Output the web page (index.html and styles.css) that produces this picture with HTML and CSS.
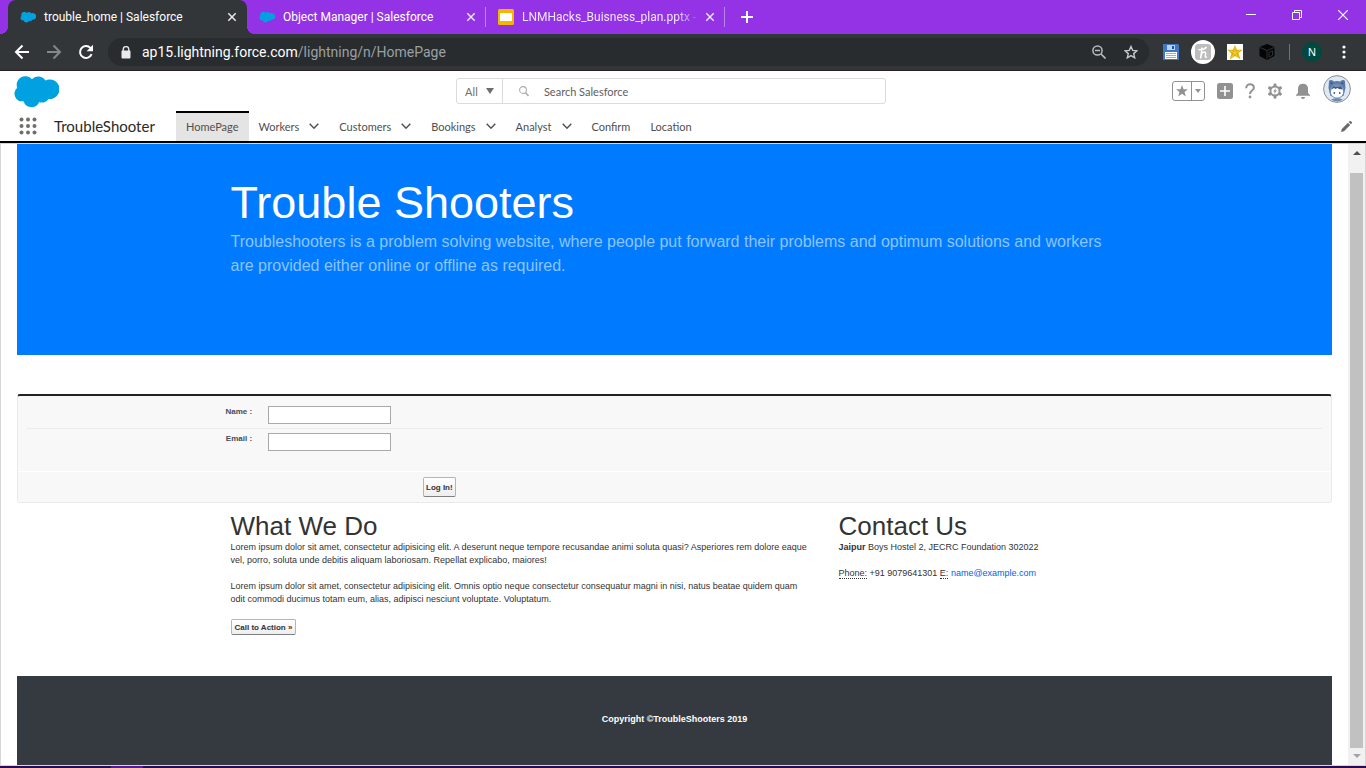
FILE: index.html
```html
<!DOCTYPE html>
<html lang="en">
<head>
<meta charset="utf-8">
<title>trouble_home | Salesforce</title>
<link rel="stylesheet" href="styles.css">
</head>
<body>
<svg class="defs" aria-hidden="true">
  <symbol id="cloud" viewBox="0 0 46 32">
    <path d="M19 4.200a8.500 8.500 0 0 1 13.500 1.200A9.800 9.800 0 1 1 35.500 24a7.500 7.500 0 0 1-9.300 3 8.300 8.300 0 0 1-15.600-.8A7.700 7.700 0 0 1 4.200 12.800 8.700 8.700 0 0 1 19 4.200z" fill="#00a1e0"/>
  </symbol>
  <symbol id="x" viewBox="0 0 10 10"><path d="M1.300 1.300l7.400 7.400M8.700 1.300L1.300 8.700" fill="none" stroke="currentColor" stroke-width="1.500"/></symbol>
  <symbol id="chev" viewBox="0 0 10 6"><path d="M.7.700L5 5.200 9.300.7" fill="none" stroke="currentColor" stroke-width="1.400"/></symbol>
</svg>

<header class="tabstrip">
  <div class="tab tab-active">
    <svg class="fav"><use href="#cloud"/></svg>
    <span class="tab-title">trouble_home | Salesforce</span>
    <button class="tab-close" aria-label="Close tab"><svg width="10" height="10"><use href="#x"/></svg></button>
  </div>
  <div class="tab">
    <svg class="fav"><use href="#cloud"/></svg>
    <span class="tab-title">Object Manager | Salesforce</span>
    <button class="tab-close" aria-label="Close tab"><svg width="10" height="10"><use href="#x"/></svg></button>
  </div>
  <div class="tab tab-last">
    <svg class="fav" viewBox="0 0 16 16"><rect width="16" height="16" rx="1.500" fill="#f7b500"/><path d="M2 4h12v8H2z" fill="#fff"/></svg>
    <span class="tab-title tab-fade">LNMHacks_Buisness_plan.pptx - G</span>
    <button class="tab-close" aria-label="Close tab"><svg width="10" height="10"><use href="#x"/></svg></button>
  </div>
  <button class="newtab" aria-label="New tab"><svg width="12" height="12" viewBox="0 0 12 12"><path d="M6 0v12M0 6h12" stroke="#fff" stroke-width="2"/></svg></button>
  <div class="win">
    <button aria-label="Minimize"><svg width="10" height="10"><path d="M0 4.500h10" stroke="#fff"/></svg></button>
    <button aria-label="Restore"><svg width="10" height="10"><path d="M.5 2.500h7v7h-7zM2.500 2.500v-2h7v7h-2" fill="none" stroke="#fff"/></svg></button>
    <button aria-label="Close window"><svg width="10" height="10"><path d="M0 0l10 10M10 0L0 10" stroke="#fff" stroke-width="1.200"/></svg></button>
  </div>
</header>

<div class="toolbar">
  <button aria-label="Back"><svg width="16" height="16" viewBox="0 0 16 16"><path d="M15 8H2M8.500 1.500L2 8l6.500 6.500" fill="none" stroke="#fff" stroke-width="2"/></svg></button>
  <button aria-label="Forward"><svg width="16" height="16" viewBox="0 0 16 16"><path d="M1 8h13M7.500 1.500L14 8l-6.500 6.500" fill="none" stroke="#85888a" stroke-width="2"/></svg></button>
  <button aria-label="Reload"><svg width="16" height="16" viewBox="0 0 16 16"><path d="M13.600 10.200A6 6 0 1 1 12.400 3.900L13.500 5" fill="none" stroke="#fff" stroke-width="2"/><path d="M15 .8v6.400H8.600z" fill="#fff"/></svg></button>
  <div class="omnibox">
    <svg width="10" height="13" viewBox="0 0 10 13"><path d="M2.200 5V3.400a2.800 2.800 0 0 1 5.600 0V5" fill="none" stroke="#e8eaed" stroke-width="1.400"/><rect y="4.500" x=".5" width="9" height="8" rx="1" fill="#e8eaed"/></svg>
    <span class="url"><b>ap15.lightning.force.com</b>/lightning/n/HomePage</span>
    <button aria-label="Zoom"><svg width="14" height="14" viewBox="0 0 14 14"><circle cx="5.500" cy="5.500" r="4.600" fill="none" stroke="#b9bbbd" stroke-width="1.500"/><path d="M3 5.500h5M9 9l4.500 4.500" stroke="#b9bbbd" stroke-width="1.600"/></svg></button>
    <button aria-label="Bookmark"><svg width="14" height="14" viewBox="0 0 14 14"><path d="M7 1.500l1.700 3.900 4.200.4-3.200 2.800 1 4.200L7 10.600l-3.700 2.200 1-4.200L1.100 5.800l4.200-.4z" fill="none" stroke="#c6c8c9" stroke-width="1.400"/></svg></button>
  </div>
  <div class="exts">
    <button class="ext" aria-label="Save"><svg width="16" height="16" viewBox="0 0 16 16"><path d="M0 0h15l1 1v15H0z" fill="#3f77c9"/><path d="M4 1h8v5H4z" fill="#b9d3f4"/><path d="M9 2h2v3H9z" fill="#22539e"/><path d="M2 8h12v7H2z" fill="#fff"/><path d="M3 9.500h10M3 11.500h10M3 13.500h10" stroke="#9bb0ca"/></svg></button>
    <button class="ext" aria-label="Honey"><svg width="24" height="24" viewBox="0 0 24 24"><circle cx="12" cy="12" r="12" fill="#fff"/><rect x="4" y="4" width="16" height="16" rx="3" fill="#bdbdbd"/><path d="M9.500 18.500C10.500 14.500 11 11 10.700 7.500M7.500 9.500c3 .5 6.500-.5 8-2.500M10.300 14.500c.8-3 5-3.500 4.300-.5-.4 1.700-1 4 1.400 2.800" fill="none" stroke="#fff" stroke-width="1.500"/></svg></button>
    <button class="ext" aria-label="Star"><svg width="16" height="16" viewBox="0 0 16 16"><path d="M0 0h16v16H0z" fill="#fff"/><path d="M8 .7l1.900 5 5.800.1-4.300 3.500 2.200 6L8 12l-5.300 3.400 1.800-6L.3 5.800l5.600-.1z" fill="#dfb000"/><path d="M8 2v7l5-2.500M8 9l3.500 4.500M8 9l-3.500 4.500M8 9L3 6.500" fill="none" stroke="#f6df66" stroke-width=".7"/></svg></button>
    <button class="ext" aria-label="Cube"><svg width="16" height="16" viewBox="0 0 16 16"><path d="M8 0l7.500 3v9L8 16 .5 12V3z" fill="#050505"/><path d="M1 3.500l7 3 7-3M8 6.500V15M10 8.500l3.500-1.700v4.500L10 13z" fill="none" stroke="#34373a" stroke-width=".9"/></svg></button>
    <span class="tool-sep"></span>
    <button class="profile" aria-label="Profile">N</button>
    <button aria-label="Menu"><svg width="4" height="14" viewBox="0 0 4 14"><g fill="#fff"><circle cx="2" cy="2" r="1.600"/><circle cx="2" cy="7" r="1.600"/><circle cx="2" cy="12" r="1.600"/></g></svg></button>
  </div>
</div>

<div class="sf-header">
  <a class="logo" href="#" aria-label="Salesforce"><svg width="46" height="32"><use href="#cloud"/></svg></a>
  <form class="search">
    <button type="button" class="scope">All <svg width="8" height="6"><path d="M0 0h8L4 6z" fill="#706e6b"/></svg></button>
    <svg class="glass" width="10" height="11" viewBox="0 0 10 11"><circle cx="4" cy="4" r="3.400" fill="none" stroke="#b0adab" stroke-width="1.100"/><path d="M6.500 6.800L9.500 10" stroke="#b0adab" stroke-width="1.600"/></svg>
    <input type="search" placeholder="Search Salesforce" aria-label="Search Salesforce">
  </form>
  <div class="sf-actions">
    <span class="favs"><button aria-label="Favorite"><svg width="12" height="12" viewBox="0 0 12 12"><path d="M6 0l1.500 4.200H12L8.500 7l1.300 4.500L6 8.800l-3.800 2.700L3.500 7 0 4.200h4.500z" fill="#919191"/></svg></button><button aria-label="Favorites list"><svg width="6" height="4"><path d="M0 0h6L3 4z" fill="#919191"/></svg></button></span>
    <button aria-label="Add"><svg width="16" height="16" viewBox="0 0 16 16"><rect width="16" height="16" rx="2.500" fill="#919191"/><path d="M8 3v10M3 8h10" stroke="#fff" stroke-width="1.600"/></svg></button>
    <button aria-label="Help"><svg width="10" height="16" viewBox="0 0 10 16"><path d="M1.200 5.200C1.200-.4 8.900.2 8.900 4.700 8.900 7.600 5 7.600 5 11" fill="none" stroke="#919191" stroke-width="2"/><circle cx="5" cy="14" r="1.400" fill="#919191"/></svg></button>
    <button aria-label="Setup"><svg width="16" height="16" viewBox="0 0 16 16"><path d="M8 1.800v12.400M2.600 4.900l10.800 6.200M2.600 11.100l10.800-6.200" stroke="#919191" stroke-width="3" stroke-linecap="round"/><circle cx="8" cy="8" r="5.500" fill="#919191"/><circle cx="8" cy="8" r="3.600" fill="#fff"/><path d="M9 4.800L6.200 8.500h1.600L7 11.200l2.900-3.700H8.200z" fill="#919191"/></svg></button>
    <button aria-label="Notifications"><svg width="16" height="16" viewBox="0 0 16 16"><path d="M3 10V5.500C3 2.700 5 .8 8 .8s5 1.900 5 4.700V10l2 2v.8H1V12z" fill="#919191"/><path d="M6 14h4a2 2 0 0 1-4 0z" fill="#919191"/></svg></button>
    <button class="avatar" aria-label="User"><svg width="28" height="28" viewBox="0 0 28 28"><circle cx="14" cy="14" r="13.400" fill="#dfe8f3" stroke="#8c8f94"/><path d="M5.500 13L6 6q1.500-2 5 .5 3-.9 6 0 3.500-2.500 5-.5l.5 7-2 8h-13z" fill="#5a7ba8"/><path d="M7.500 8.500l2-.5M20.500 8.500l-2-.5" stroke="#3c5780" stroke-width="1.500"/><circle cx="14" cy="16" r="7.500" fill="#718fb8"/><path d="M8 17c0-4 2.500-5.500 6-5.500s6 1.500 6 5.500-3 5.500-6 5.500-6-1.500-6-5.500z" fill="#fff"/><path d="M8.500 14.500l2.500-1.500 1.500 1 2-1 1.500 1 3.500.5-1.500-3h-8z" fill="#405b84"/><circle cx="11.300" cy="18" r=".9" fill="#405b84"/><circle cx="16.700" cy="18" r=".9" fill="#405b84"/><path d="M8 24.500q6-3 12 0-6 4-12 0z" fill="#6c8ab4"/></svg></button>
  </div>
</div>

<nav class="sf-nav">
  <button class="launcher" aria-label="App Launcher"><svg width="18" height="18" viewBox="0 0 18 18"><g fill="#706e6b"><circle cx="2.500" cy="2.500" r="2"/><circle cx="9" cy="2.500" r="2"/><circle cx="15.500" cy="2.500" r="2"/><circle cx="2.500" cy="9" r="2"/><circle cx="9" cy="9" r="2"/><circle cx="15.500" cy="9" r="2"/><circle cx="2.500" cy="15.500" r="2"/><circle cx="9" cy="15.500" r="2"/><circle cx="15.500" cy="15.500" r="2"/></g></svg></button>
  <span class="app-name">TroubleShooter</span>
  <a class="current" href="#">HomePage</a>
  <a href="#">Workers <svg width="10" height="6"><use href="#chev"/></svg></a>
  <a href="#">Customers <svg width="10" height="6"><use href="#chev"/></svg></a>
  <a href="#">Bookings <svg width="10" height="6"><use href="#chev"/></svg></a>
  <a href="#">Analyst <svg width="10" height="6"><use href="#chev"/></svg></a>
  <a href="#">Confirm</a>
  <a href="#">Location</a>
  <button class="edit" aria-label="Edit navigation"><svg width="11" height="11" viewBox="0 0 11 11"><path d="M0 11l.8-3L7 1.800 9.200 4 3 10.200zM7.700 1.100L8.800 0q.6-.2 1.200.3l.7.700q.5.600.2 1.200L9.900 3.300z" fill="#6b6966"/></svg></button>
</nav>

<div class="viewport">
  <main class="page">
    <section class="hero">
      <div class="container">
        <h1>Trouble Shooters</h1>
        <p>Troubleshooters is a problem solving website, where people put forward their problems and optimum solutions and workers are provided either online or offline as required.</p>
      </div>
    </section>
    <form class="block">
      <div class="fields">
        <div class="field"><label for="name">Name :</label><input id="name" type="text"></div>
        <div class="field"><label for="email">Email :</label><input id="email" type="text"></div>
      </div>
      <div class="block-actions"><button type="button" class="btn btn-login">Log In!</button></div>
    </form>
    <section class="container columns">
      <div class="what">
        <h2>What We Do</h2>
        <p>Lorem ipsum dolor sit amet, consectetur adipisicing elit. A deserunt neque tempore recusandae animi soluta quasi? Asperiores rem dolore eaque vel, porro, soluta unde debitis aliquam laboriosam. Repellat explicabo, maiores!</p>
        <p>Lorem ipsum dolor sit amet, consectetur adipisicing elit. Omnis optio neque consectetur consequatur magni in nisi, natus beatae quidem quam odit commodi ducimus totam eum, alias, adipisci nesciunt voluptate. Voluptatum.</p>
        <button type="button" class="btn">Call to Action »</button>
      </div>
      <div class="contact">
        <h2>Contact Us</h2>
        <p><strong>Jaipur</strong> Boys Hostel 2, JECRC Foundation 302022</p>
        <p><abbr title="Phone">Phone:</abbr> +91 9079641301 <abbr title="Email">E:</abbr> <a href="mailto:name@example.com">name@example.com</a></p>
      </div>
    </section>
    <footer class="footer">Copyright ©TroubleShooters 2019</footer>
  </main>
  <div class="scrollbar">
    <svg width="8" height="4"><path d="M0 4h8L4 0z" fill="#505050"/></svg>
    <span class="thumb"></span>
    <svg width="8" height="4"><path d="M0 0h8L4 4z" fill="#a3a3a3"/></svg>
  </div>
</div>
<div class="taskbar"><span></span></div>
</body>
</html>
```
FILE: styles.css
```css
* { box-sizing: border-box; }
body {
  margin: 0;
  height: 100vh;
  display: flex;
  flex-direction: column;
  overflow: hidden;
  background: #fff;
  font-family: "Liberation Sans", Arial, sans-serif;
}
button {
  display: flex;
  align-items: center;
  justify-content: center;
  flex: none;
  padding: 0;
  border: 0;
  background: none;
  color: inherit;
  font-family: inherit;
}
svg { flex: none; display: block; }
h1, h2, p { margin: 0; font-weight: 400; }
.defs { position: absolute; width: 0; height: 0; }

/* Browser tabs */
.tabstrip {
  flex: none;
  display: flex;
  height: 34px;
  padding-left: 8px;
  background: #9433e5;
  color: #fff;
  font: 12px Roboto, sans-serif;
}
.tab {
  position: relative;
  display: flex;
  align-items: center;
  flex: 0 1 239px;
  min-width: 0;
  padding: 0 10px 0 12px;
  gap: 8px;
}
.tab-active { background: #323639; border-radius: 8px 8px 0 0; }
.tab-active::before, .tab-active::after {
  content: "";
  position: absolute;
  bottom: 0;
  width: 8px;
  height: 8px;
}
.tab-active::before { left: -8px; background: radial-gradient(circle at 0 0, #9433e5 8px, #323639 8px); }
.tab-active::after { right: -8px; background: radial-gradient(circle at 100% 0, #9433e5 8px, #323639 8px); }
.tab:not(.tab-active)::after {
  content: "";
  position: absolute;
  right: 0;
  top: 7px;
  height: 20px;
  border-right: 1px solid #b983ee;
}
.fav { width: 16px; height: 16px; }
.tab-title { flex: 1; min-width: 0; white-space: nowrap; }
.tab-close { color: #ece6f2; }
.tab-fade { mask-image: linear-gradient(90deg, #000 88%, transparent 102%); color: #f0e6fb; }
.newtab { width: 44px; }
.win { display: flex; margin-left: auto; align-items: flex-start; }
.win button { width: 46px; height: 29px; }

/* Address bar */
.toolbar {
  flex: none;
  display: flex;
  align-items: center;
  height: 37px;
  padding: 0 20px 0 14px;
  gap: 16px;
  background: #323639;
  border-bottom: 1px solid #281f24;
}
.omnibox {
  flex: 1;
  display: flex;
  align-items: center;
  height: 28px;
  margin-left: -2px;
  padding: 0 8px 0 13px;
  gap: 11px;
  border-radius: 14px;
  background: #282c2f;
  color: #9aa0a4;
  font: 14px Roboto, sans-serif;
}
.url { flex: 1; overflow: hidden; white-space: nowrap; }
.url b { font-weight: 400; color: #fff; }
.omnibox button { width: 21px; }
.exts { display: flex; align-items: center; margin-left: -10px; }
.ext { width: 32px; }
.tool-sep { height: 16px; margin: 0 12px 0 6px; border-left: 1px solid #717476; }
.profile { width: 20px; height: 20px; margin-right: 20px; border-radius: 50%; background: #00493f; color: #fff; font-size: 11px; }

/* Salesforce header */
.sf-header {
  flex: none;
  display: grid;
  grid-template-columns: 20fr 430px 21fr;
  align-items: center;
  height: 40px;
  padding: 0 15px 0 13px;
}
.logo { width: 46px; }
.search {
  display: flex;
  align-items: center;
  height: 26px;
  border: 1px solid #dddbda;
  border-radius: 3px;
}
.scope {
  width: 46px;
  height: 24px;
  gap: 8px;
  border-right: 1px solid #dddbda;
  color: #706e6b;
  font: 11px Lato, sans-serif;
}
.glass { margin: 0 15px 0 16px; }
.search input {
  flex: 1;
  min-width: 0;
  padding: 0;
  border: 0;
  background: none;
  font: 11px Lato, sans-serif;
}
.search input::placeholder { color: #5f5d5b; opacity: 1; }
.sf-actions { display: flex; align-items: center; justify-content: flex-end; gap: 12px; }
.avatar { padding-bottom: 4px; }
.favs { display: flex; height: 20px; border: 1px solid #919191; border-radius: 3px; }
.favs button { width: 18px; }
.favs button + button { width: 13px; border-left: 1px solid #919191; }

/* Salesforce navigation */
.sf-nav {
  flex: none;
  display: flex;
  height: 32px;
  padding-left: 19px;
  border-bottom: 2px solid #000;
  color: #514f4d;
  font: 11px Lato, sans-serif;
}
.launcher { width: 18px; }
.app-name { align-self: center; width: 122px; margin-left: 17px; color: #2b2826; font-size: 15px; }
.sf-nav a {
  display: flex;
  align-items: center;
  gap: 10px;
  padding: 0 10px;
  color: inherit;
  text-decoration: none;
}
.sf-nav .current { background: #e4e4e4; box-shadow: inset 0 2px #000; }
.edit { margin: 0 14px 0 auto; }

/* Page */
.viewport {
  flex: 1;
  min-height: 0;
  display: flex;
  border: 1px solid #d8d6d5;
}
.page {
  flex: 1;
  min-width: 0;
  display: flex;
  flex-direction: column;
  padding: 0 16px;
  overflow: hidden;
  color: #333;
  font-size: 9px;
  line-height: 13px;
}
.container { width: 100%; max-width: 912px; margin: 0 auto; padding: 0 12px; }
.hero { padding: 34px 0 77px; background: #007bff; color: #8cc4ff; }
.hero h1 { margin-bottom: 2px; color: #fff; font-size: 45px; line-height: 50px; }
.hero p { font-size: 16px; line-height: 24px; }
.block {
  margin-top: 39px;
  border: 1px solid #eaeaea;
  border-top: 2px solid #222;
  border-radius: 3px;
  background: #f8f8f8;
}
.fields { padding: 6px 9px 16px; }
.field { display: grid; grid-template-columns: 18% 123px; column-gap: 8px; padding: 4px 0; }
.field + .field { border-top: 1px solid #ececec; }
.field label { padding-right: 8px; color: #4a4a56; font-size: 8px; line-height: 11px; font-weight: 700; text-align: right; }
.field input { width: 123px; height: 18px; padding: 0 2px; border: 1px solid #a9a9a9; background: #fff; font: 9px "Liberation Sans", Arial, sans-serif; }
.block-actions { padding: 5px 0 5px calc(31% - 2px); border-top: 1px solid #fff; }
.btn {
  height: 16px;
  padding: 0 3px;
  border: 1px solid #b5b5b5;
  border-bottom-color: #7f7f7f;
  border-radius: 2px;
  background: linear-gradient(#fff, #eee);
  color: #333;
  font-size: 8px;
  font-weight: 700;
}
.btn-login { height: 20px; padding: 0 2px; }
.columns { display: grid; grid-template-columns: 2fr 1fr; padding: 9px 0 0; }
.columns > div { padding: 0 12px; }
.columns > .what { padding-right: 16px; }
.columns h2 { font-size: 26px; line-height: 29px; }
.columns p { margin-bottom: 13px; }
.columns a { color: #015ff0; text-decoration: none; }
.columns abbr { text-decoration: none; border-bottom: 1px dotted #333; }
.footer {
  flex: 1;
  margin-top: 41px;
  padding-top: 37px;
  background: #343a40;
  color: #fff;
  font-size: 9px;
  font-weight: 700;
  text-align: center;
}
.scrollbar {
  display: flex;
  flex-direction: column;
  align-items: center;
  width: 17px;
  padding: 7px 0;
  gap: 6px;
  background: #f1f1f1;
}
.thumb { flex: 1; width: 13px; margin-top: 12px; background: #c1c1c1; }
.taskbar { flex: none; height: 2px; padding-left: 111px; background: #2c0a4d; }
.taskbar span { display: block; width: 32px; height: 2px; background: #5a1a8c; }
```
